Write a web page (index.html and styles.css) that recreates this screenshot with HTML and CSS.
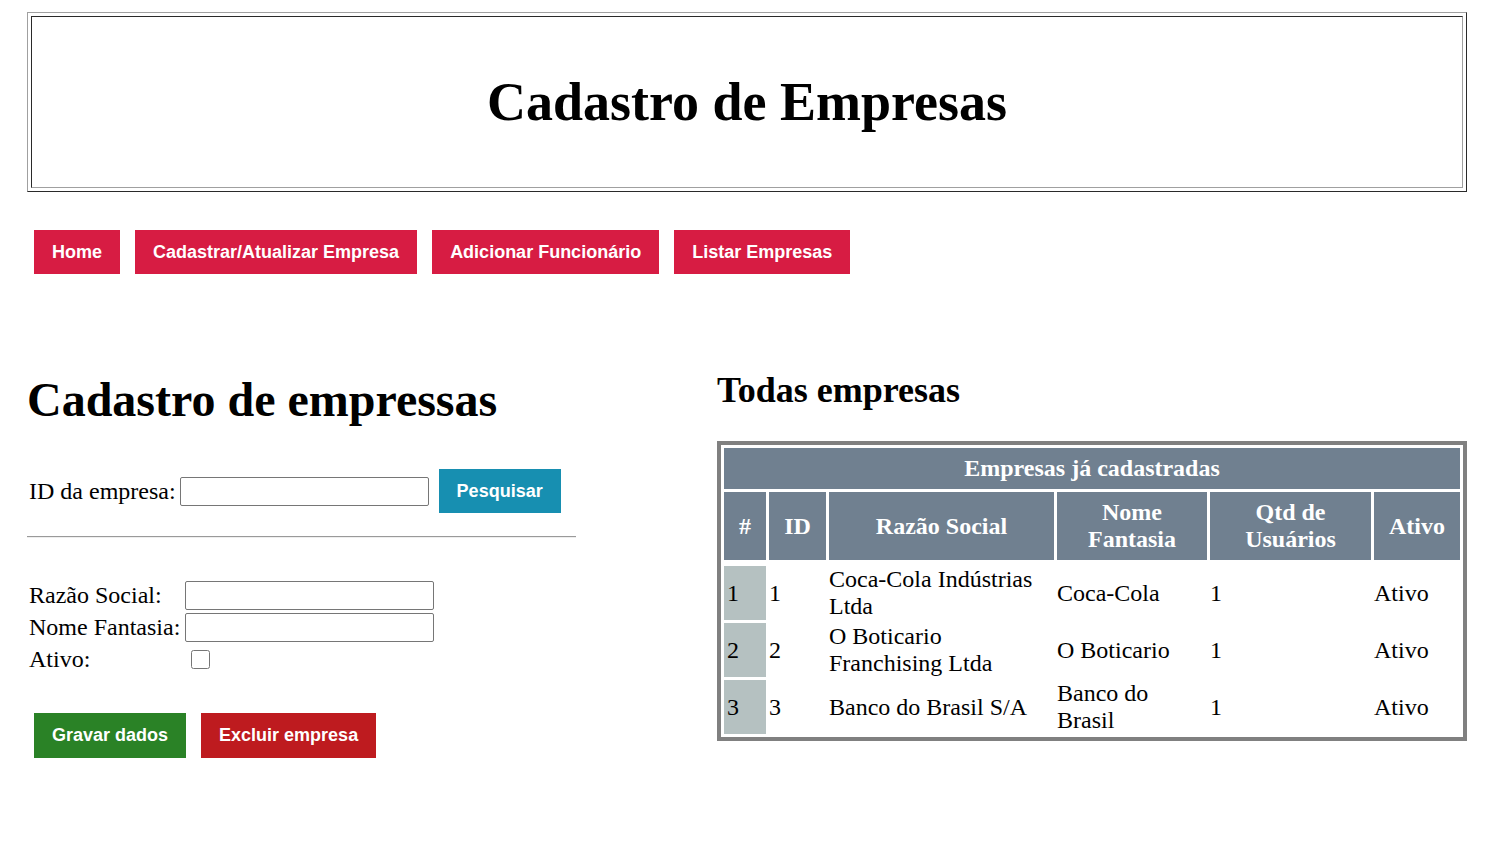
FILE: index.html
```html
<!DOCTYPE html>
<html lang="pt-BR">
<head>
<meta charset="utf-8">
<title>Cadastro de Empresas</title>
<link rel="stylesheet" href="styles.css">
</head>
<body>
<div class="page">
  <header class="masthead">
    <div class="masthead-inner">
      <h1 class="site-title">Cadastro de Empresas</h1>
    </div>
  </header>

  <nav class="nav">
    <a class="btn btn-nav" href="#">Home</a>
    <a class="btn btn-nav" href="#">Cadastrar/Atualizar Empresa</a>
    <a class="btn btn-nav" href="#">Adicionar Funcionário</a>
    <a class="btn btn-nav" href="#">Listar Empresas</a>
  </nav>

  <main class="columns">
    <section class="form-col">
      <h1 class="form-title">Cadastro de empressas</h1>
      <div class="search-row">
        <label class="lbl" for="idEmpresa">ID da empresa:</label>
        <input class="field" id="idEmpresa" type="text">
        <button class="btn btn-search" type="button">Pesquisar</button>
      </div>
      <hr class="divider">
      <div class="fields">
        <label class="lbl" for="razao">Razão Social:</label>
        <input class="field" id="razao" type="text">
        <label class="lbl" for="fantasia">Nome Fantasia:</label>
        <input class="field" id="fantasia" type="text">
        <label class="lbl" for="ativo">Ativo:</label>
        <div><input class="check" id="ativo" type="checkbox"></div>
      </div>
      <div class="actions">
        <button class="btn btn-save" type="button">Gravar dados</button>
        <button class="btn btn-delete" type="button">Excluir empresa</button>
      </div>
    </section>

    <section class="list-col">
      <h2 class="list-title">Todas empresas</h2>
      <table class="grid">
        <colgroup>
          <col class="c-num">
          <col class="c-id">
          <col class="c-razao">
          <col class="c-nome">
          <col class="c-qtd">
          <col class="c-ativo">
        </colgroup>
        <thead>
          <tr><th class="cap" colspan="6">Empresas já cadastradas</th></tr>
          <tr class="head-row">
            <th>#</th>
            <th>ID</th>
            <th>Razão Social</th>
            <th>Nome Fantasia</th>
            <th>Qtd de Usuários</th>
            <th>Ativo</th>
          </tr>
        </thead>
        <tbody>
          <tr>
            <td class="num">1</td><td>1</td><td>Coca-Cola Indústrias Ltda</td><td>Coca-Cola</td><td>1</td><td>Ativo</td>
          </tr>
          <tr>
            <td class="num">2</td><td>2</td><td>O Boticario Franchising Ltda</td><td>O Boticario</td><td>1</td><td>Ativo</td>
          </tr>
          <tr>
            <td class="num">3</td><td>3</td><td>Banco do Brasil S/A</td><td>Banco do Brasil</td><td>1</td><td>Ativo</td>
          </tr>
        </tbody>
      </table>
    </section>
  </main>
</div>
</body>
</html>
```

FILE: styles.css
```css
* { box-sizing: border-box; }

html, body {
  margin: 0;
  padding: 0;
  background: #fff;
  color: #000;
}

body {
  font-family: "Liberation Serif", "Times New Roman", serif;
  font-size: 24px;
}

.page {
  width: 1467px;
  padding: 12px 0 0 27px;
}

/* Header */
.masthead {
  height: 180px;
  border: 1px solid;
  border-color: #a0a0a0 #2a2a2a #2a2a2a #a0a0a0;
  padding: 3px;
}

.masthead-inner {
  height: 100%;
  border: 1px solid;
  border-color: #2a2a2a #a0a0a0 #a0a0a0 #2a2a2a;
  display: flex;
  align-items: center;
  justify-content: center;
}

.site-title {
  margin: 0;
  font-size: 54px;
  font-weight: bold;
  line-height: 62px;
}

/* Buttons */
.btn {
  display: inline-block;
  border: none;
  margin: 0;
  padding: 12px 18px;
  font-family: "Liberation Sans", Arial, sans-serif;
  font-weight: bold;
  font-size: 18px;
  line-height: 20px;
  color: #fff;
  text-decoration: none;
  cursor: pointer;
}

.nav {
  margin-top: 38px;
  padding-left: 7px;
  display: flex;
  gap: 15px;
}

.btn-nav { background: #d71c43; }
.btn-search { background: #178fb1; margin-left: 10px; }
.btn-save { background: #2a8226; }
.btn-delete { background: #be1b1f; }

/* Columns */
.columns {
  margin-top: 90px;
  display: grid;
  grid-template-columns: 549px 750px;
  column-gap: 141px;
  align-items: start;
}

.form-title {
  margin: 8px 0 0;
  font-size: 48px;
  line-height: 55px;
  font-weight: bold;
}

.lbl {
  font-size: 24px;
  white-space: nowrap;
}

.search-row {
  margin-top: 42px;
  padding-left: 2px;
  display: flex;
  align-items: center;
}

.search-row .lbl {
  margin-right: 4px;
}

.field {
  width: 249px;
  height: 29px;
  margin: 0;
  border: 1px solid #767676;
  border-radius: 2px;
  padding: 1px 2px;
  font-size: 13px;
  background: #fff;
}

.divider {
  margin: 23px 0 0;
  height: 0;
  border: none;
  border-top: 1px solid #9a9a9a;
  border-bottom: 1px solid #eeeeee;
}

.fields {
  margin-top: 43px;
  padding-left: 2px;
  display: grid;
  grid-template-columns: 154px auto;
  column-gap: 2px;
  row-gap: 3px;
  grid-auto-rows: 29px;
  align-items: center;
  justify-items: start;
}

.fields > div {
  display: flex;
  align-items: center;
  height: 29px;
}

.check {
  width: 19px;
  height: 19px;
  margin: 0 0 0 6px;
}

.actions {
  margin-top: 39px;
  padding-left: 7px;
  display: flex;
  gap: 15px;
}

.actions .btn {
  padding-bottom: 13px;
}

/* List */
.list-title {
  margin: 0;
  padding-top: 6px;
  font-size: 36px;
  line-height: 40px;
  font-weight: bold;
}

.grid {
  margin-top: 31px;
  width: 750px;
  table-layout: fixed;
  border-collapse: separate;
  border-spacing: 3px;
  border: 4px solid #808080;
  font-size: 24px;
  line-height: 27px;
}

.c-num { width: 42px; }
.c-id { width: 57px; }
.c-razao { width: 225px; }
.c-nome { width: 150px; }
.c-qtd { width: 161px; }
.c-ativo { width: 86px; }

.grid th {
  background: #708090;
  color: #fff;
  font-weight: bold;
  text-align: center;
  padding: 7px 1px;
}

.grid .head-row th {
  border-bottom: 3px solid #fff;
}

.grid td {
  padding: 0;
  text-align: left;
  vertical-align: middle;
  height: 54px;
}

.grid td.num {
  background: #b5c1c1;
  padding-left: 3px;
}
```
